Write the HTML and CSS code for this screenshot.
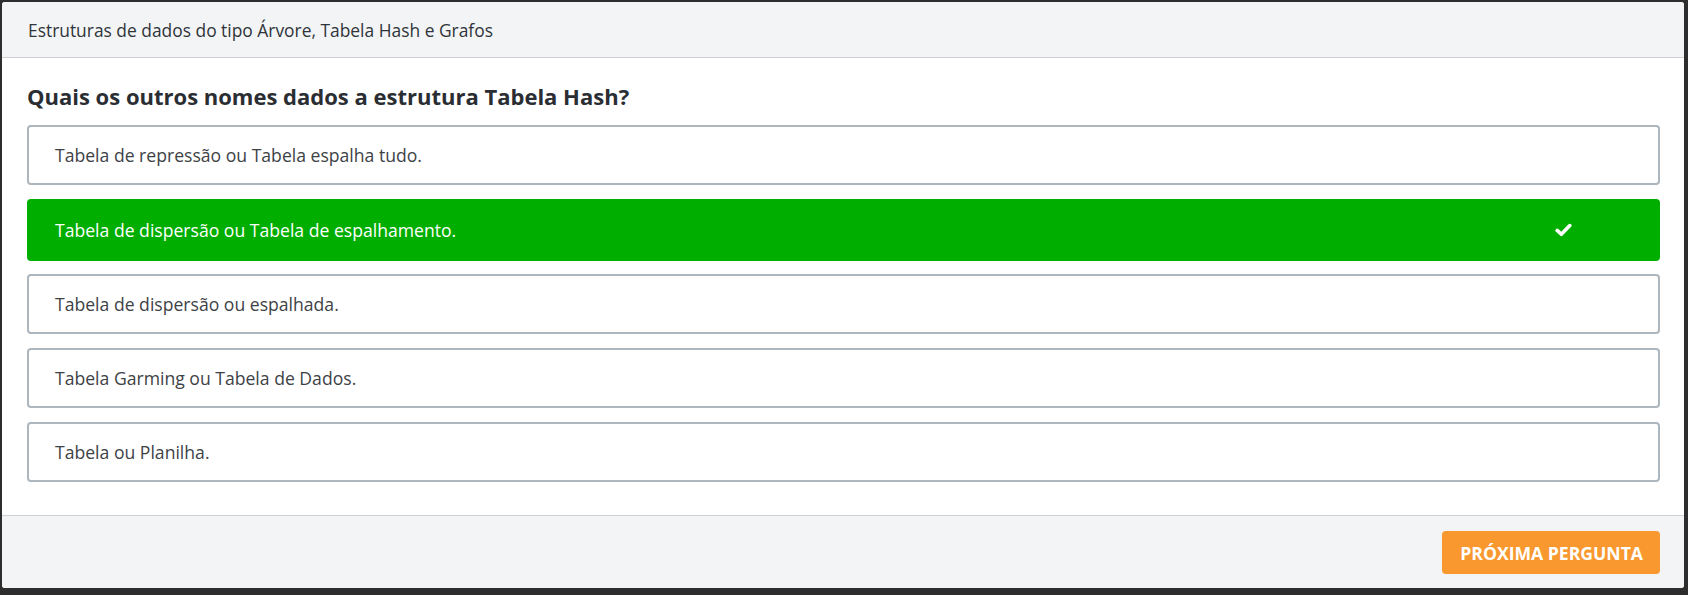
FILE: index.html
```html
<!DOCTYPE html>
<html lang="pt-BR">
<head>
<meta charset="utf-8">
<title>Quiz</title>
<link rel="stylesheet" href="styles.css">
</head>
<body>
<div class="card">
  <div class="card-header">Estruturas de dados do tipo Árvore, Tabela Hash e Grafos</div>
  <div class="card-body">
    <h2 class="question">Quais os outros nomes dados a estrutura Tabela Hash?</h2>
    <div class="options">
      <div class="option"><span class="option-text">Tabela de repressão ou Tabela espalha tudo.</span></div>
      <div class="option correct"><span class="option-text">Tabela de dispersão ou Tabela de espalhamento.</span>
        <svg class="check" width="17" height="14" viewBox="0 0 17 14"><polyline points="2.2,7.4 6.3,11.3 14.8,2.6" fill="none" stroke="#fff" stroke-width="3.6" stroke-linecap="round" stroke-linejoin="round"/></svg>
      </div>
      <div class="option"><span class="option-text">Tabela de dispersão ou espalhada.</span></div>
      <div class="option"><span class="option-text">Tabela Garming ou Tabela de Dados.</span></div>
      <div class="option"><span class="option-text">Tabela ou Planilha.</span></div>
    </div>
  </div>
  <div class="card-footer">
    <button class="btn-next">PRÓXIMA PERGUNTA</button>
  </div>
</div>
</body>
</html>
```
FILE: styles.css
```css
html, body {
  margin: 0;
  height: 100%;
}
body {
  background: #2d2d2d;
  padding: 2px 4px 6px 2px;
  box-sizing: border-box;
  font-family: "Open Sans", "Noto Sans", sans-serif;
  color: #333;
}
.card {
  background: #fff;
  border-radius: 3px;
  overflow: hidden;
}
.card-header {
  background: #f3f4f6;
  border-bottom: 1px solid #cdd1d6;
  height: 55px;
  display: flex;
  align-items: center;
  padding: 0 26px;
  font-size: 17.4px;
  color: #2f343a;
}
.card-body {
  padding: 23px 24px 33px 25px;
}
.question {
  margin: 0 0 14px 0;
  font-size: 22px;
  line-height: 30px;
  font-weight: 700;
  color: #2a2e33;
}
.options {
  display: flex;
  flex-direction: column;
  gap: 14px;
}
.option {
  height: 60px;
  box-sizing: border-box;
  border: 2px solid #adb5bd;
  border-radius: 4px;
  display: flex;
  align-items: center;
  padding: 0 26px;
  font-size: 17.6px;
  color: #3d4246;
}
.option-text {
  flex: 1;
}
.option.correct {
  height: 62px;
  margin-bottom: -1px;
  background: #00ae00;
  border-color: #00ae00;
  color: #fff;
  padding-right: 86px;
}
.check {
  display: block;
}
.card-footer {
  background: #f3f4f6;
  border-top: 1px solid #cdd1d6;
  height: 73px;
  display: flex;
  justify-content: flex-end;
  align-items: flex-start;
  padding: 15px 24px 0 0;
  box-sizing: border-box;
}
.btn-next {
  height: 43px;
  padding: 0 17px 0 18px;
  border: none;
  border-radius: 4px;
  background: #f9982e;
  color: #fff;
  font-family: "Open Sans", "Noto Sans", sans-serif;
  font-size: 17.6px;
  font-weight: 700;
}
```
